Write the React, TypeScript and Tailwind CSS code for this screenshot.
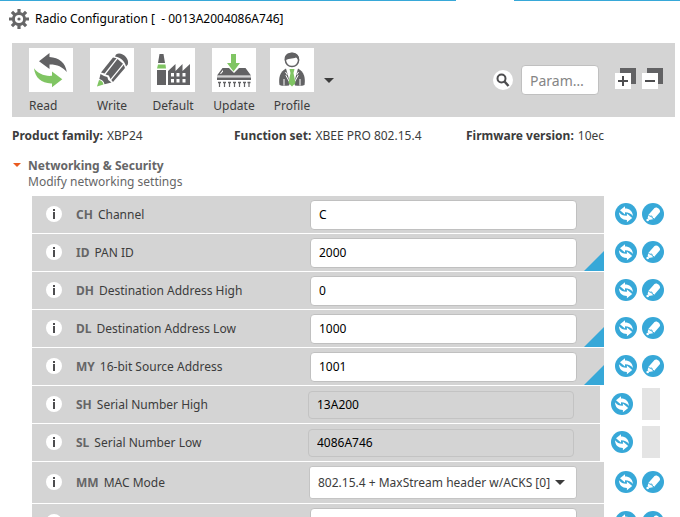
import React from "react";

type Setting = {
  code: string;
  name: string;
  value: string;
  kind: "text" | "readonly" | "select";
  changed?: boolean;
};

const settings: Setting[] = [
  { code: "CH", name: "Channel", value: "C", kind: "text" },
  { code: "ID", name: "PAN ID", value: "2000", kind: "text", changed: true },
  { code: "DH", name: "Destination Address High", value: "0", kind: "text" },
  { code: "DL", name: "Destination Address Low", value: "1000", kind: "text", changed: true },
  { code: "MY", name: "16-bit Source Address", value: "1001", kind: "text", changed: true },
  { code: "SH", name: "Serial Number High", value: "13A200", kind: "readonly" },
  { code: "SL", name: "Serial Number Low", value: "4086A746", kind: "readonly" },
  { code: "MM", name: "MAC Mode", value: "802.15.4 + MaxStream header w/ACKS [0]", kind: "select" },
  { code: "", name: "", value: "", kind: "text" },
];

function GearIcon() {
  return (
    <svg viewBox="0 0 20 20" className="size-5 shrink-0" fill="none" stroke="#666667">
      <circle cx="10" cy="10" r="5.6" strokeWidth="3" />
      <circle cx="10" cy="10" r="1.6" fill="#666667" stroke="none" />
      <g strokeWidth="3.2">
        <path d="M10 0v4M10 16v4M0 10h4M16 10h4M2.9 2.9l2.8 2.8M14.3 14.3l2.8 2.8M17.1 2.9l-2.8 2.8M5.7 14.3l-2.8 2.8" />
      </g>
    </svg>
  );
}

function ReadIcon() {
  return (
    <svg viewBox="0 0 44 44" className="size-11 bg-white">
      <path fill="#626264" d="M10 13.2 20.5 5v4C30 9.500 36.500 14.500 37.800 24 33.500 19 28 16.500 20.500 16.600V21Z" />
      <path fill="#80c563" d="M5 20.300C9 25.500 15 28.400 23 27.800V23.500L33.300 31.200 23 39.300V35.400C13 35.800 6 30 5 20.300Z" />
    </svg>
  );
}

function WriteIcon() {
  return (
    <svg viewBox="0 0 44 44" className="size-11 bg-white">
      <path fill="#626264" d="M26 6.500C31 3 40 10 37.800 16.500L36 18.500C35 13.500 31 9.500 25 8.500Z" />
      <path fill="#626264" d="M23 9.500 26.500 10.200 14.500 25.500 11 24.500Z" />
      <path fill="#626264" d="M27.500 11 33 15.800 20.500 31 18.800 27.500 15.500 26.500Z" />
      <path fill="#626264" d="M33.800 16.800 35 20 23 34 21.300 32Z" />
      <path fill="#626264" d="M10.500 26 14 28 17.300 29 18.300 32 21.500 34.500 14.500 36.200C14 33.500 12 31.500 9.300 31Z" />
      <path fill="#80c563" d="M9 32C11.500 32.500 13 34 13.500 36.500L7 38.500Z" />
    </svg>
  );
}

function DefaultIcon() {
  return (
    <svg viewBox="0 0 44 44" className="size-11 bg-white">
      <path fill="#626264" d="M8.500 6h4l1.500 9H7ZM6 22h9v15H6Z" />
      <path fill="#80c563" d="M7 16.500h7.500l.5 4H6Z" />
      <path fill="#626264" d="M17 37V23l7.500-7v7l7-7v7l7.500-7v21Z" />
      <path fill="#fff" d="M20 25h3v3.500h-3ZM25.500 25h3v3.500h-3ZM31.500 25h3v3.500h-3ZM20 31h3v3.500h-3ZM25.500 31h3v3.500h-3ZM31.500 31h3v3.500h-3Z" />
    </svg>
  );
}

function UpdateIcon() {
  return (
    <svg viewBox="0 0 44 44" className="size-11 bg-white">
      <path fill="#626264" d="M5 27.500 10.500 20H17l5 5 5-5h6.500L39 27.500Z" />
      <path fill="#fff" d="M8 25.500 11 22v1.500L9 26Z" />
      <path fill="#a5a5a7" d="M5 28.500h34V30H5Z" />
      <path fill="#626264" d="M5 30h34v2H5Z" />
      <path fill="#80c563" d="M19 6h5v9h4l-6.500 8.500L15 15h4Z" />
      <path stroke="#626264" strokeWidth="1.200" d="M7.500 34v5M12.500 34v5M17.500 34v5M22.500 34v5M27.500 34v5M32.500 34v5M37 34v5" />
      <path stroke="#626264" strokeWidth="1.500" d="M6 34.500h3M11 34.500h3M16 34.500h3M21 34.500h3M26 34.500h3M31 34.500h3M35.500 34.500h3" />
    </svg>
  );
}

function ProfileIcon() {
  return (
    <svg viewBox="0 0 44 44" className="size-11 bg-white">
      <circle cx="22" cy="12" r="6.600" fill="#fff" stroke="#626264" strokeWidth="1.500" />
      <path fill="#626264" d="M15 13C13.500 8 17 4.500 22 4.500S30 8 29 13.500C28 11.500 27.500 10.500 26 9.500 23 11 17 10 15 13Z" />
      <path fill="#626264" d="M16 20.500 20 35 19 37.500C15 38 12 38 9.500 37 8.500 30 9.500 24 16 20.500Z" />
      <path fill="#626264" d="M28 20.500 24 35 25 37.500C29 38 32 38 34.500 37 35.500 30 34.500 24 28 20.500Z" />
      <path stroke="#fff" strokeWidth="1" fill="none" d="M14 31v6.500M30 31v6.500M15.500 24l1.500 2.500-1 1 4 7.500M28.500 24 27 26.500l1 1-4 7.500" />
      <path fill="#80c563" d="M19.500 21h5L23.500 25 25.500 35 22 38.500 18.500 35 20.500 25Z" />
    </svg>
  );
}

function RefreshIcon() {
  return (
    <svg viewBox="0 0 22 22" className="size-[22px]">
      <circle cx="11" cy="11" r="11" fill="#37a8d8" />
      <path fill="#fff" d="M5 7.300 10 3.300V5.400C14.500 5.400 17.700 8 17.900 13 16 10.500 13.500 9.300 10 9.300V11.500Z" />
      <path fill="#fff" d="M4 9.300C6 11.800 8.500 13 11.900 12.800V10.600L17.200 15 11.900 19.200V17C7.200 17 4.200 14.300 4 9.300Z" />
    </svg>
  );
}

function PencilIcon() {
  return (
    <svg viewBox="0 0 22 22" className="size-[22px]">
      <circle cx="11" cy="11" r="11" fill="#37a8d8" />
      <path fill="#fff" d="M12.500 5C14.500 3.300 18.500 6 18 9L12 16 7 17 5.500 15.200 6.500 11.800Z" />
      <path stroke="#37a8d8" strokeWidth="1" fill="none" d="M6.300 11.700 7.800 13.300 9.800 13 10.300 15 12 15.800" />
      <path fill="#37a8d8" d="M5 14.500 7.800 17.500 7 18 4.500 15.500Z" />
      <circle cx="5.700" cy="17" r="1.300" fill="#fff" />
    </svg>
  );
}

const tools = [
  { label: "Read", icon: <ReadIcon /> },
  { label: "Write", icon: <WriteIcon /> },
  { label: "Default", icon: <DefaultIcon /> },
  { label: "Update", icon: <UpdateIcon /> },
];

function ToolButton({ label, icon }: { label: string; icon: React.ReactNode }) {
  return (
    <button type="button" className="flex! w-11 flex-col gap-[6px]">
      {icon}
      <span className={label === "Read" ? "self-start" : "self-center"}>{label}</span>
    </button>
  );
}

function StackIcon({ expand }: { expand: boolean }) {
  return (
    <svg viewBox="0 0 21 21" className="size-[21px]">
      <path fill="#626264" d="M5 0h16v16H5Z" />
      <path fill="#fff" d="M0 5h16v16H0Z" />
      <path stroke="#4d4d4f" strokeWidth="2" d={expand ? "M3 13h10M8 8v10" : "M3 13h10"} />
    </svg>
  );
}

function Field({ setting, id }: { setting: Setting; id: string }) {
  if (setting.kind === "select") {
    return (
      <div className="relative -ml-px w-[268px]">
        <select
          id={id}
          className="h-[33px] w-full appearance-none rounded-[3px] border border-[#c4c4c4] bg-white pl-2 text-[#3c3c3c] outline-none"
        >
          <option>{setting.value}</option>
        </select>
        <svg viewBox="0 0 10 5" className="pointer-events-none absolute top-[14px] right-3 h-[5px] w-[10px]">
          <path d="M0 0h10L5 5Z" fill="#3c3c3c" />
        </svg>
      </div>
    );
  }
  if (setting.kind === "readonly") {
    return (
      <input
        id={id}
        readOnly
        defaultValue={setting.value}
        className="-ml-0.5 h-7 w-[266px] rounded border border-[#c3c3c3] bg-[#d4d4d4] px-2 text-black outline-none"
      />
    );
  }
  return (
    <input
      id={id}
      defaultValue={setting.value}
      aria-label={setting.code ? undefined : "Value"}
      className="h-[30px] w-[267px] rounded border border-[#c0c0c0] bg-white px-2 text-black outline-none"
    />
  );
}

function SettingRow({ setting, index }: { setting: Setting; index: number }) {
  const id = "setting-" + index;
  const readonly = setting.kind === "readonly";
  return (
    <li className={readonly ? "flex items-center pr-1" : "flex items-center"}>
      <div
        className={
          "relative flex flex-1 items-center bg-[#d4d4d4] pl-[14px] " +
          (setting.kind === "select" ? "h-[41px]" : "h-[37px]")
        }
      >
        <button type="button" aria-label="Information" className="mb-px size-4 shrink-0">
          <svg viewBox="0 0 16 16" className="size-4">
            <circle cx="8" cy="8" r="8" fill="#fff" />
            <path fill="#4d4d4f" d="M7 3h2v2H7ZM7 6h2v7H7Z" />
          </svg>
        </button>
        <label htmlFor={id} className="ml-[14px] flex w-[234px] shrink-0 gap-[5px] text-[#3c3c3c]">
          <b className="font-bold text-[#666667]">{setting.code}</b>
          {setting.name}
        </label>
        <Field setting={setting} id={id} />
        {setting.changed && (
          <svg viewBox="0 0 20 20" className="absolute right-0 bottom-0 size-5">
            <path d="M20 0v20H0Z" fill="#37a8d8" />
          </svg>
        )}
      </div>
      <div
        className={
          readonly ? "mb-px flex items-center gap-[9px] pl-[11px]" : "mb-px flex items-center gap-[5px] pl-[11px]"
        }
      >
        <button type="button" aria-label="Read setting">
          <RefreshIcon />
        </button>
        {readonly ? (
          <span className="h-8 w-[18px] bg-[#e4e4e4]" />
        ) : (
          <button type="button" aria-label="Write setting">
            <PencilIcon />
          </button>
        )}
      </div>
    </li>
  );
}

function Info({ label, value }: { label: string; value: string }) {
  return (
    <div className="flex gap-1">
      <dt className="font-bold">{label}</dt>
      <dd>{value}</dd>
    </div>
  );
}

export default function App() {
  return (
    <main className="h-screen overflow-hidden bg-white font-['Noto_Sans',sans-serif] text-[12px] leading-4 text-[#3c3c3c] [&_button]:block">
      <div className="flex h-px justify-between">
        <div className="w-[456px] bg-[#37a8d8]" />
        <div className="w-[166px] bg-[#37a8d8]" />
      </div>
      <header className="flex h-[42px] items-start gap-[6px] pt-2 pl-[9px]">
        <GearIcon />
        <h1 className="leading-5 whitespace-pre text-black">{"Radio Configuration [  - 0013A2004086A746]"}</h1>
      </header>

      <div className="mr-[5px] ml-3 flex h-[74px] items-start bg-[#d4d4d4] pr-3 pl-[17px]">
        <div className="flex pt-[5px]">
          <div className="mr-[14px] flex gap-[17px]">
            {tools.map((tool) => (
              <ToolButton key={tool.label} label={tool.label} icon={tool.icon} />
            ))}
          </div>
          <ToolButton label="Profile" icon={<ProfileIcon />} />
        </div>
        <button type="button" aria-label="More profiles" className="ml-[10px] self-center">
          <svg viewBox="0 0 10 5" className="h-[5px] w-[10px]">
            <path d="M0 0h10L5 5Z" fill="#3c3c3c" />
          </svg>
        </button>
        <div className="ml-auto flex items-center self-center">
          <svg viewBox="0 0 20 20" className="size-5" fill="none" stroke="#4d4d4f">
            <circle cx="10" cy="10" r="10" fill="#fff" stroke="none" />
            <circle cx="8.500" cy="8.500" r="4" strokeWidth="2" />
            <path d="M11.500 11.500 15.500 16" strokeWidth="2.500" />
          </svg>
          <input
            type="text"
            aria-label="Search parameter"
            placeholder="Param…"
            className="ml-2 h-[30px] w-[78px] rounded border border-[#c0c0c0] bg-white pl-2 text-[14px] outline-none placeholder:text-[#858585]"
          />
          <button type="button" aria-label="Expand all" className="mb-1 ml-4">
            <StackIcon expand />
          </button>
          <button type="button" aria-label="Collapse all" className="mb-1 ml-[6px]">
            <StackIcon expand={false} />
          </button>
        </div>
      </div>

      <dl className="grid grid-cols-[222px_232px_1fr] pt-[11px] pl-3">
        <Info label="Product family:" value="XBP24" />
        <Info label="Function set:" value="XBEE PRO 802.15.4" />
        <Info label="Firmware version:" value="10ec" />
      </dl>

      <section className="pt-[14px]">
        <div className="flex items-start gap-[7px] pl-[13px]">
          <button type="button" aria-label="Collapse section" className="pt-[5px]">
            <svg viewBox="0 0 8 4" className="h-1 w-2">
              <path d="M0 0h8L4 4Z" fill="#ea5b1f" />
            </svg>
          </button>
          <div className="leading-4 text-[#666667]">
            <h2 className="font-bold">Networking &amp; Security</h2>
            <p>Modify networking settings</p>
          </div>
        </div>
        <ul className="flex flex-col gap-px pt-[6px] pr-4 pl-8">
          {settings.map((setting, index) => (
            <SettingRow key={index} setting={setting} index={index} />
          ))}
        </ul>
      </section>
    </main>
  );
}
